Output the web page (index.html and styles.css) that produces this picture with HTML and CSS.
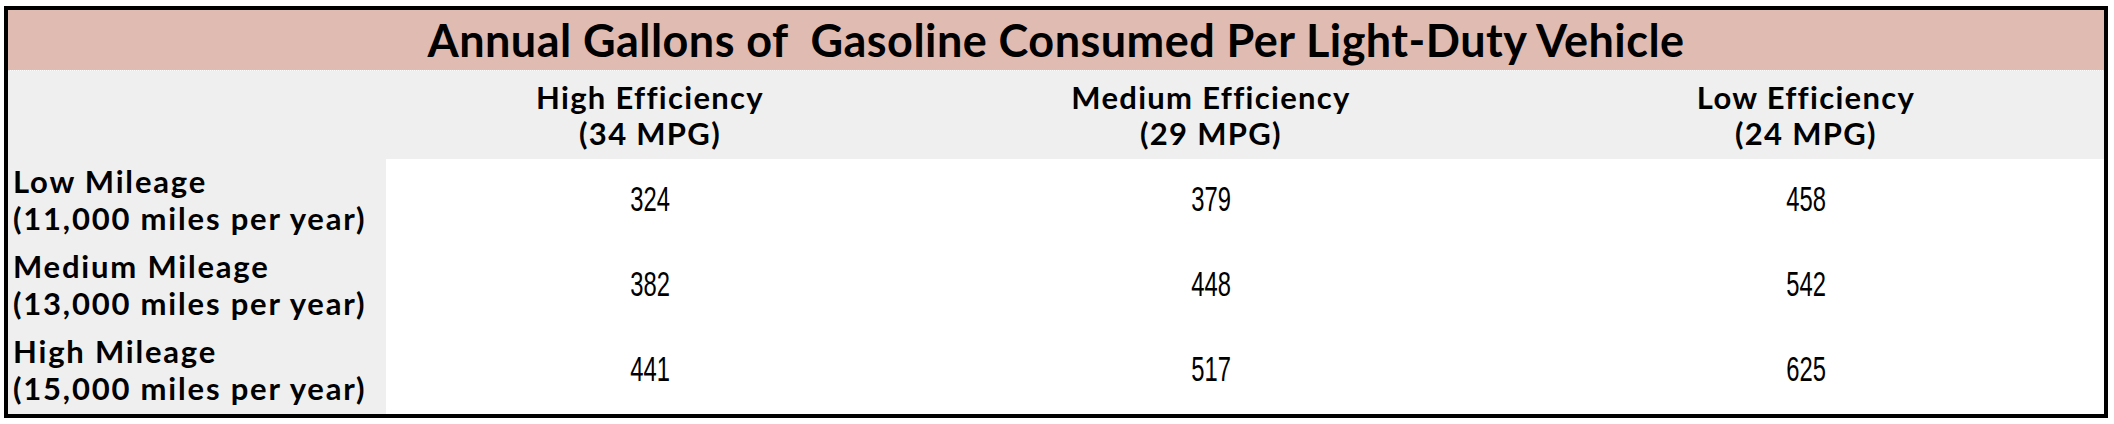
FILE: index.html
```html
<!DOCTYPE html>
<html>
	<head>
		<meta charset="UTF-8">
		<title>Annual Gallons of Gasoline Consumed</title>
		<link rel="stylesheet" href="styles.css">
	</head>
	<body>
		<div class="sheet">
			<div class="title">Annual Gallons of&nbsp; Gasoline Consumed Per Light-Duty Vehicle</div>
			<div class="grid">
				<div class="cell corner"></div>
				<div class="cell head">High Efficiency<br>(34 MPG)</div>
				<div class="cell head">Medium Efficiency<br>(29 MPG)</div>
				<div class="cell head">Low Efficiency<br>(24 MPG)</div>

				<div class="cell label">Low Mileage<br>(11,000 miles per year)</div>
				<div class="cell num"><span>324</span></div>
				<div class="cell num"><span>379</span></div>
				<div class="cell num"><span>458</span></div>

				<div class="cell label">Medium Mileage<br>(13,000 miles per year)</div>
				<div class="cell num"><span>382</span></div>
				<div class="cell num"><span>448</span></div>
				<div class="cell num"><span>542</span></div>

				<div class="cell label">High Mileage<br>(15,000 miles per year)</div>
				<div class="cell num"><span>441</span></div>
				<div class="cell num"><span>517</span></div>
				<div class="cell num"><span>625</span></div>
			</div>
		</div>
	</body>
</html>
```

FILE: styles.css
```css
body{
	margin: 0;
	background: #FFF;
	font-family: "Lato", "Liberation Sans", sans-serif;
	color: #000;
}
.sheet{
	width: 2104px;
	height: 412px;
	margin: 6px 0 0 4px;
	border: solid 4px #000;
	box-sizing: border-box;
	display: flex;
	flex-direction: column;
}
.title{
	height: 60px;
	background: #E0BBB2;
	display: flex;
	align-items: center;
	justify-content: center;
	font-size: 45px;
	font-weight: 700;
	letter-spacing: 0.45px;
}
.grid{
	flex: 1;
	display: grid;
	grid-template-columns: 378px 528px 594px 1fr;
	grid-template-rows: 88px repeat(3, 1fr);
	border-top: dotted 1px #E4E4E4;
}
.cell{
	display: flex;
	align-items: center;
	background: #FFF;
}
.corner, .head, .label{
	background: #EFEFEF;
}
.head{
	justify-content: center;
	text-align: center;
	font-size: 31px;
	font-weight: 700;
	letter-spacing: 1.3px;
	line-height: 36px;
}
.label{
	padding: 0 0 3px 5px;
	font-size: 31px;
	font-weight: 700;
	letter-spacing: 1.8px;
	line-height: 37px;
}
.num{
	justify-content: center;
	padding-bottom: 6px;
	font-family: "Liberation Sans", sans-serif;
	font-size: 35px;
}
.num span{
	display: inline-block;
	transform: scaleX(0.68);
}
```
